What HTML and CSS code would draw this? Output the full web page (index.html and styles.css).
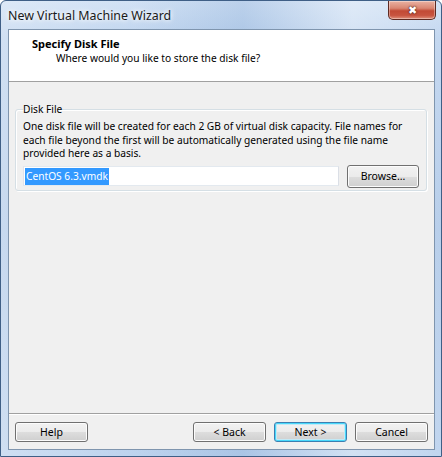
FILE: index.html
```html
<!DOCTYPE html>
<html lang="en">
<head>
  <meta charset="UTF-8" />
  <meta name="viewport" content="width=device-width, initial-scale=1.0"/>
  <title>New Virtual Machine Wizard</title>
  <link rel="stylesheet" href="styles.css">
</head>
<body>
  <div class="window">
    <div class="titlebar">
      <span class="title">New Virtual Machine Wizard</span>
      <button class="close" title="Close">&#x2716;</button>
    </div>
    <div class="client">
      <div class="header">
        <div class="header-title">Specify Disk File</div>
        <div class="header-sub">Where would you like to store the disk file?</div>
      </div>
      <div class="body">
        <fieldset class="group">
          <legend>Disk File</legend>
          <p>One disk file will be created for each 2 GB of virtual disk capacity. File names for each file beyond the first will be automatically generated using the file name provided here as a basis.</p>
          <div class="file-row">
            <div class="file-input"><span class="selected">CentOS 6.3.vmdk</span></div>
            <button class="btn btn-browse">Browse...</button>
          </div>
        </fieldset>
      </div>
      <div class="footer">
        <button class="btn">Help</button>
        <div class="spacer"></div>
        <button class="btn">&lt; Back</button>
        <button class="btn btn-default">Next &gt;</button>
        <button class="btn">Cancel</button>
      </div>
    </div>
  </div>
</body>
</html>
```

FILE: styles.css
```css
html, body {
  margin: 0;
  padding: 0;
}
body {
  font-family: "Noto Sans", "Open Sans", sans-serif;
  font-size: 10.2px;
  color: #000;
  background: #fff;
}
.window {
  width: 442px;
  height: 457px;
  box-sizing: border-box;
  display: flex;
  flex-direction: column;
  border: 1px solid #3f5f86;
  border-radius: 6px 6px 0 0;
  background:
    linear-gradient(90deg, rgba(255,255,255,0.3), rgba(255,255,255,0.05) 30%, rgba(110,150,200,0.2) 55%, rgba(255,255,255,0.35) 80%, rgba(255,255,255,0.1)),
    linear-gradient(180deg, #cfe0f4 0%, #bdd3ee 8%, #b0c9e8 50%, #bad1ed 100%);
}
.titlebar {
  height: 28px;
  display: flex;
  align-items: flex-start;
}
.title {
  font-size: 12.4px;
  margin: 6px 0 0 7px;
  color: #1a1a1a;
  text-shadow: 0 0 6px #fff, 0 0 4px #fff;
}
.close {
  margin-left: auto;
  margin-right: 5px;
  width: 48px;
  height: 19px;
  border: 1px solid #5d2a22;
  border-top: none;
  border-radius: 0 0 5px 5px;
  background: linear-gradient(180deg, #eab2a3 0%, #d98672 40%, #c24a35 55%, #c85440 80%, #e0907b 100%);
  box-shadow: inset 0 0 0 1px rgba(255,255,255,0.35);
  color: #fff;
  font-size: 11px;
  line-height: 16px;
  padding: 0;
  text-shadow: 0 0 2px #4a1810, 0 0 1px #4a1810;
}
.client {
  flex: 1;
  margin: 0 6px 6px 7px;
  border: 1px solid #7f95ae;
  background: #f0f0f0;
  display: flex;
  flex-direction: column;
}
.header {
  background: #fff;
  padding: 7px 0 16px 23px;
  border-bottom: 1px solid #a0a0a0;
  line-height: 14px;
}
.header-title {
  font-weight: bold;
  font-size: 11px;
}
.header-sub {
  padding-left: 24px;
}
.body {
  flex: 1;
  padding: 20px 7px 0 6px;
}
.group {
  margin: 0;
  padding: 4px 7px 2px;
  border: 1px solid #d5dfe5;
  border-radius: 3px;
  box-shadow: 1px 1px 0 #fff inset, 1px 1px 0 #fff;
}
.group legend {
  padding: 0;
  line-height: 14px;
}
.group p {
  margin: 0 0 4px;
  line-height: 13.5px;
}
.file-row {
  display: flex;
  align-items: center;
  gap: 8px;
  height: 23px;
}
.file-input {
  flex: 1;
  height: 20px;
  box-sizing: border-box;
  background: #fff;
  border: 1px solid #abadb3;
  border-top-color: #e3e9ef;
  border-left-color: #e2e3ea;
  border-right-color: #dbdfe6;
  border-bottom-color: #e3e9ef;
  padding: 2px 1px;
  line-height: 14px;
}
.selected {
  background: #3399ff;
  color: #fff;
  padding: 1px 1px 2px;
}
.btn {
  font-family: inherit;
  font-size: 10.5px;
  width: 73px;
  height: 20px;
  padding: 0;
  color: #000;
  border: 1px solid #707070;
  border-radius: 3px;
  background: linear-gradient(180deg, #f2f2f2 0%, #ebebeb 50%, #dddddd 51%, #cfcfcf 100%);
  box-shadow: inset 0 0 0 1px #fcfcfc;
}
.btn-browse {
  width: 72px;
  height: 23px;
}
.btn-default {
  border-color: #3c7fb1;
  box-shadow: inset 0 0 0 1px #48d8fb, inset 0 0 0 2px #c3e9f6;
}
.footer {
  display: flex;
  gap: 8px;
  padding: 8px 6px 7px;
  border-top: 1px solid #a0a0a0;
  box-shadow: inset 0 1px 0 #fff;
}
.spacer {
  flex: 1;
}
```
